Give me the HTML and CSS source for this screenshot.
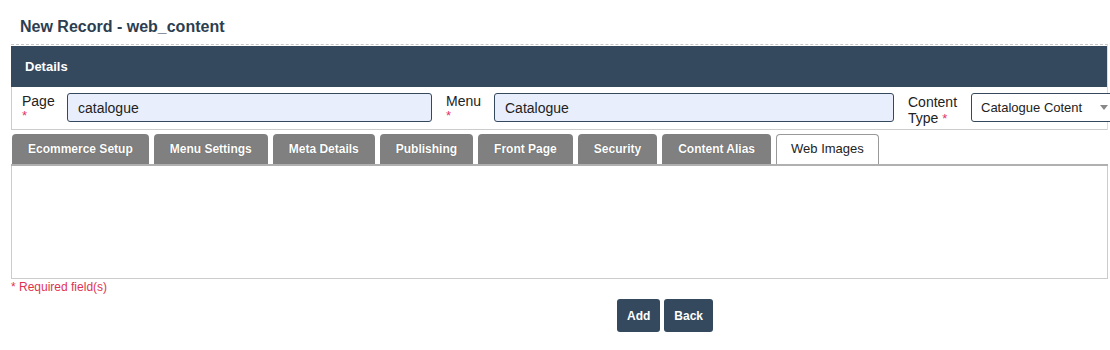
FILE: index.html
```html
<!DOCTYPE html>
<html>
<head>
<meta charset="utf-8">
<link rel="stylesheet" href="styles.css">
</head>
<body>
<div class="page">
  <h1 class="title">New Record - web_content</h1>
  <div class="panel">
    <div class="panel-head">Details</div>
    <div class="form-row">
      <label class="lbl lbl-page">Page<span class="req req-below">*</span></label>
      <input class="field field-page" type="text" value="catalogue">
      <label class="lbl lbl-menu">Menu<span class="req req-below">*</span></label>
      <input class="field field-menu" type="text" value="Catalogue">
      <label class="lbl lbl-type">Content<br>Type <span class="req">*</span></label>
      <div class="select"><span>Catalogue Cotent</span><span class="arrow"></span></div>
    </div>
  </div>
  <div class="tabs">
    <div class="tab">Ecommerce Setup</div>
    <div class="tab">Menu Settings</div>
    <div class="tab">Meta Details</div>
    <div class="tab">Publishing</div>
    <div class="tab">Front Page</div>
    <div class="tab">Security</div>
    <div class="tab">Content Alias</div>
    <div class="tab active">Web Images</div>
  </div>
  <div class="tab-body"></div>
  <div class="required">* Required field(s)</div>
  <div class="actions">
    <button class="btn">Add</button>
    <button class="btn">Back</button>
  </div>
</div>
</body>
</html>
```
FILE: styles.css
```css
html, body {
  margin: 0;
  padding: 0;
  background: #fff;
  font-family: "Liberation Sans", Arial, sans-serif;
  color: #333;
  overflow: hidden;
}
.page {
  padding-left: 11px;
  width: 1097px;
}
.title {
  margin: 0;
  height: 44px;
  box-sizing: border-box;
  padding: 18px 0 0 9px;
  font-size: 16px;
  font-weight: bold;
  color: #2c3e50;
  line-height: 18px;
}
.panel {
  border-top: 1px dashed #c8c8c8;
  border-right: 1px solid #ddd;
}
.panel-head {
  margin-top: 1px;
  height: 41px;
  background: #34495e;
  color: #fff;
  font-weight: bold;
  font-size: 13px;
  line-height: 41px;
  padding-left: 14px;
}
.form-row {
  display: flex;
  align-items: flex-start;
  height: 42px;
  border-left: 1px solid #ccc;
  border-bottom: 1px solid #ccc;
}
.form-row > * { flex: none; }
.lbl {
  font-size: 14px;
  line-height: 16px;
  color: #222;
  padding-top: 6px;
  box-sizing: border-box;
}
.lbl-page { margin-left: 10px; width: 45px; }
.lbl-menu { margin-left: 14px; width: 48px; }
.lbl-type { margin-left: 14px; width: 63px; padding-top: 7px; }
.req { color: #e2336b; font-size: 13px; }
.req-below {
  display: block;
  line-height: 14px;
}
.field {
  margin-top: 6px;
  height: 29px;
  box-sizing: border-box;
  border: 1px solid #34495e;
  border-radius: 3px;
  background: #e8eefb;
  font-family: "Liberation Sans", Arial, sans-serif;
  font-size: 14px;
  color: #222;
  padding: 0 10px;
  outline: none;
}
.field-page { width: 365px; }
.field-menu { width: 400px; }
.select {
  margin-top: 6px;
  height: 29px;
  width: 148px;
  box-sizing: border-box;
  border: 1px solid #34495e;
  border-radius: 3px;
  background: #fff;
  font-size: 13px;
  color: #222;
  display: flex;
  align-items: center;
  padding-left: 9px;
  gap: 18px;
}
.arrow {
  width: 0;
  height: 0;
  border-left: 4px solid transparent;
  border-right: 4px solid transparent;
  border-top: 5px solid #888;
}
.tabs {
  margin-top: 4px;
  display: flex;
  gap: 5px;
  padding-left: 1px;
  border-bottom: 2px solid #b0b0b0;
}
.tab {
  height: 30px;
  box-sizing: border-box;
  padding: 0 16px;
  background: #808080;
  color: #fff;
  font-size: 12px;
  font-weight: bold;
  line-height: 30px;
  border-radius: 4px 4px 0 0;
  text-shadow: 0 0 1px #555;
}
.tab.active {
  background: #fff;
  color: #222;
  border: 1px solid #999;
  border-bottom: none;
  font-size: 13px;
  font-weight: normal;
  line-height: 28px;
  padding: 0 14px;
  text-shadow: none;
}
.tab-body {
  height: 112px;
  border: 1px solid #ccc;
  border-top: none;
}
.required {
  color: #e0334f;
  font-size: 12px;
  line-height: 14px;
  margin-top: 1px;
}
.actions {
  display: flex;
  gap: 4px;
  padding-left: 606px;
  margin-top: 5px;
}
.btn {
  height: 33px;
  border: none;
  border-radius: 3px;
  background: #34495e;
  color: #fff;
  font-family: "Liberation Sans", Arial, sans-serif;
  font-weight: bold;
  font-size: 12px;
  padding: 0 10px;
}
```
